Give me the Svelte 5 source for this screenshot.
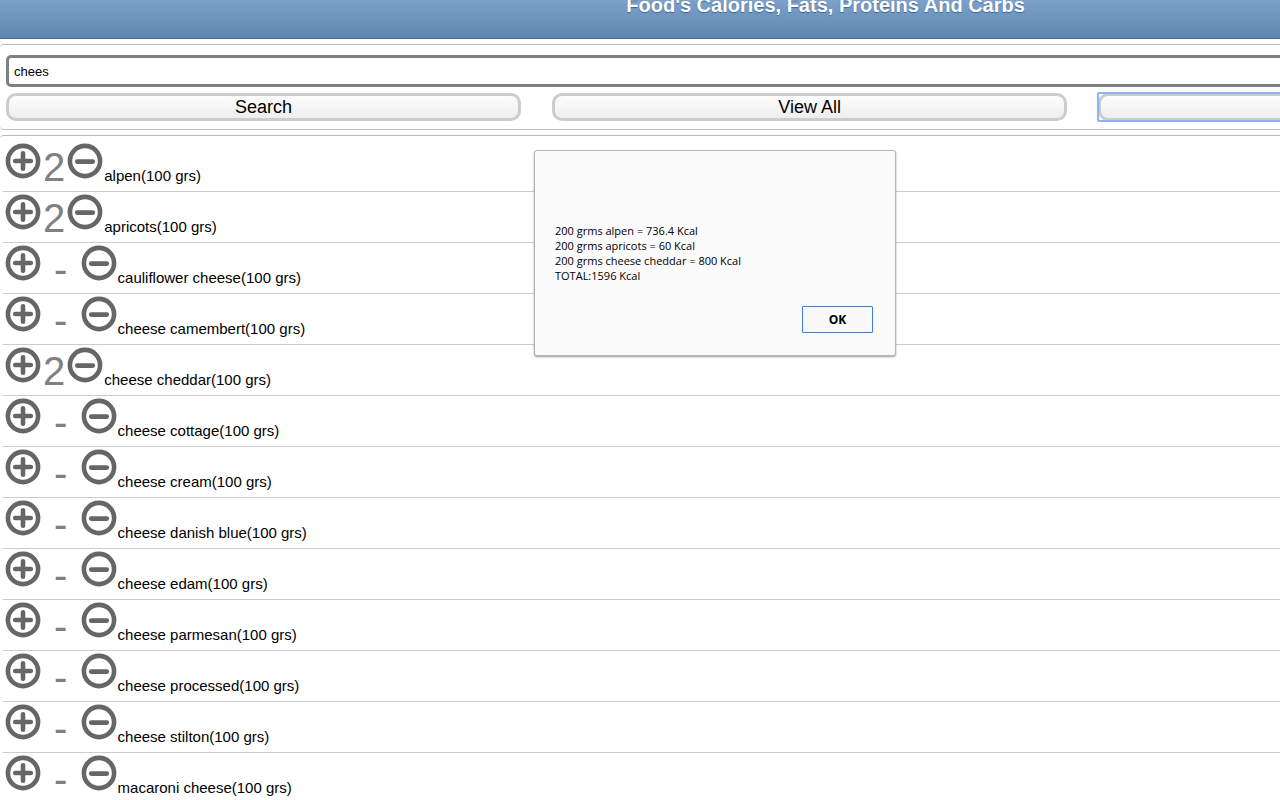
<script lang="ts">
	type Food = { name: string; count: number };

	let query = $state('chees');
	let showResult = $state(true);

	let foods: Food[] = $state([
		{ name: 'alpen', count: 2 },
		{ name: 'apricots', count: 2 },
		{ name: 'cauliflower cheese', count: 0 },
		{ name: 'cheese camembert', count: 0 },
		{ name: 'cheese cheddar', count: 2 },
		{ name: 'cheese cottage', count: 0 },
		{ name: 'cheese cream', count: 0 },
		{ name: 'cheese danish blue', count: 0 },
		{ name: 'cheese edam', count: 0 },
		{ name: 'cheese parmesan', count: 0 },
		{ name: 'cheese processed', count: 0 },
		{ name: 'cheese stilton', count: 0 },
		{ name: 'macaroni cheese', count: 0 }
	]);

	const result = [
		'200 grms alpen = 736.4 Kcal',
		'200 grms apricots = 60 Kcal',
		'200 grms cheese cheddar = 800 Kcal',
		'TOTAL:1596 Kcal'
	];
</script>

<div class="viewport">
	<div class="page">
		<header>
			<h1>Food's Calories, Fats, Proteins And Carbs</h1>
		</header>

		<section class="panel search">
			<input type="text" aria-label="Food" bind:value={query} />
			<div class="actions">
				<button type="button">Search</button>
				<button type="button">View All</button>
				<button type="button" class="focused" aria-label="Calculate" onclick={() => (showResult = true)}></button>
			</div>
		</section>

		<ul class="panel foods">
			{#each foods as food}
				<li>
					<button type="button" class="icon" aria-label="Add {food.name}" onclick={() => food.count++}>
						<svg viewBox="0 0 38 38" width="38" height="38">
							<circle cx="19" cy="19" r="15.1" />
							<path d="M11.2 19h15.6M19 11.2v15.6" />
						</svg>
					</button>
					<span class="count">{food.count || ' - '}</span>
					<button
						type="button"
						class="icon"
						aria-label="Remove {food.name}"
						onclick={() => (food.count = Math.max(0, food.count - 1))}
					>
						<svg viewBox="0 0 38 38" width="38" height="38">
							<circle cx="19" cy="19" r="15.1" />
							<path d="M11.2 19.6h15.6" />
						</svg>
					</button>
					<span class="name">{food.name}(100 grs)</span>
				</li>
			{/each}
		</ul>
	</div>

	{#if showResult}
		<div class="dialog" role="alertdialog" aria-label="Result">
			<div class="message">
				{#each result as line}
					<p>{line}</p>
				{/each}
			</div>
			<button type="button" class="ok" onclick={() => (showResult = false)}>OK</button>
		</div>
	{/if}
</div>

<style>
	:global(body) {
		background: white;
		overflow: hidden;
	}
	.viewport {
		position: relative;
		height: 100vh;
		overflow: hidden;
		font-family: 'Liberation Sans', Arial, sans-serif;
		color: black;
	}
	/* the page is wider than the window and runs off its right side */
	.page { width: 129%; }
	header {
		box-sizing: border-box;
		height: 39px;
		overflow: hidden;
		border-bottom: 1px solid #456f9a;
		background: linear-gradient(#7ca1cb, #5e87b0);
	}
	h1 {
		margin: -6px 0 0;
		font-size: 20px;
		line-height: 22px;
		text-align: center;
		color: white;
		text-shadow: 0 1px 1px #3e6790;
	}
	.panel {
		border: 1px solid #bbb;
		border-left: 0;
		border-radius: 4px;
	}
	.search {
		margin-top: 5px;
		padding: 10px 6px 8px;
	}
	input {
		display: block;
		box-sizing: border-box;
		width: 100%;
		height: 32px;
		padding: 0 5px;
		border: 3px solid #808080;
		border-radius: 5px;
		background: white;
		font: 13px 'Liberation Sans', Arial, sans-serif;
		color: black;
	}
	.actions {
		display: grid;
		grid-template-columns: repeat(3, 1fr);
		margin-top: 6px;
	}
	.actions button {
		height: 28px;
		margin-right: 31px;
		padding: 0;
		border: 3px solid #ccc;
		border-radius: 10px;
		background: linear-gradient(#fdfdfd, #eee);
		font: 18px/22px 'Liberation Sans', Arial, sans-serif;
		color: black;
	}
	.actions .focused { position: relative; }
	.focused::after {
		content: '';
		position: absolute;
		inset: -4px;
		border: 2px solid #8fb2f5;
		border-radius: 2px;
	}
	.foods {
		margin: 5px 0 0;
		padding: 5px 3px;
		list-style: none;
	}
	li {
		display: flex;
		align-items: baseline;
		box-sizing: border-box;
		height: 51px;
		padding: 1px;
		border-bottom: 1px solid #ccc;
	}
	.icon {
		align-self: flex-start;
		padding: 0;
		border: 0;
		background: none;
	}
	.icon svg {
		display: block;
		fill: none;
		stroke: #666;
		stroke-width: 4.6;
		stroke-linecap: round;
	}
	.count {
		margin-top: 2px;
		padding: 0 1px;
		font-size: 40px;
		line-height: 46px;
		white-space: pre;
		color: #808080;
	}
	.name {
		font-size: 15px;
		line-height: 20px;
	}
	.dialog {
		position: absolute;
		top: 150px;
		left: 534px;
		display: flex;
		flex-direction: column;
		box-sizing: border-box;
		width: 362px;
		padding: 72px 22px 22px 20px;
		border: 1px solid #b6b6b6;
		border-radius: 3px;
		background: #fbfbfb;
		box-shadow: 0 1px 2px rgba(0, 0, 0, 0.4);
		font-family: 'Open Sans', 'Noto Sans', sans-serif;
		font-size: 11px;
		line-height: 15px;
	}
	p { margin: 0; }
	.ok {
		align-self: flex-end;
		width: 71px;
		height: 27px;
		margin-top: 23px;
		padding: 0;
		border: 1px solid #3c7be8;
		border-radius: 1px;
		background: #f9f9f9;
		font: bold 12px 'Open Sans', 'Noto Sans', sans-serif;
		color: black;
	}
</style>
